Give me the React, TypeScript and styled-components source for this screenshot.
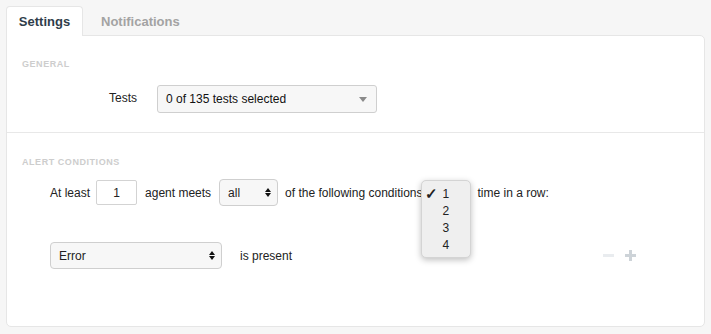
import React from 'react';
import styled, { createGlobalStyle } from 'styled-components';

const GlobalStyle = createGlobalStyle`
  html, body {
    margin: 0;
    padding: 0;
    background: #f6f6f6;
    font-family: "Liberation Sans", Arial, sans-serif;
    font-size: 12px;
    color: #222;
  }
`;

const Page = styled.div`
  width: 711px;
  height: 334px;
  padding: 6px 6px 0 6px;
  box-sizing: border-box;
`;

const TabBar = styled.div`
  display: flex;
  height: 30px;
`;

const Tab = styled.div<{ active?: boolean }>`
  width: ${(p) => (p.active ? '77px' : 'auto')};
  padding: ${(p) => (p.active ? '0' : '0 17px')};
  box-sizing: border-box;
  display: flex;
  align-items: center;
  justify-content: center;
  font-size: 13px;
  font-weight: bold;
  color: ${(p) => (p.active ? '#2f3d4a' : '#a3a3a3')};
  background: ${(p) => (p.active ? '#fff' : 'transparent')};
  border: 1px solid ${(p) => (p.active ? '#e6e6e6' : 'transparent')};
  border-bottom: none;
  border-radius: 4px 4px 0 0;
  position: relative;
  z-index: 1;
  height: 30px;
`;

const Panel = styled.div`
  background: #fff;
  border: 1px solid #e6e6e6;
  border-radius: 0 5px 5px 5px;
  height: 292px;
  box-sizing: border-box;
  margin-top: -1px;
  position: relative;
`;

const Section = styled.div<{ bordered?: boolean }>`
  padding: ${(p) => (p.bordered ? '24px 15px 0' : '23px 15px 0')};
  border-top: ${(p) => (p.bordered ? '1px solid #e8e8e8' : 'none')};
  height: ${(p) => (p.bordered ? 'auto' : '96px')};
  box-sizing: border-box;
`;

const SectionTitle = styled.div`
  font-size: 9px;
  font-weight: bold;
  color: #cdcdcd;
  letter-spacing: 0.55px;
  text-transform: uppercase;
  line-height: 10px;
`;

const FieldRow = styled.div`
  display: flex;
  align-items: center;
  margin-top: 16px;
`;

const FieldLabel = styled.div`
  width: 135px;
  padding-right: 20px;
  box-sizing: border-box;
  text-align: right;
  font-size: 12px;
  margin-top: -3px;
`;

const Dropdown = styled.div<{ w: number }>`
  width: ${(p) => p.w}px;
  height: 28px;
  box-sizing: border-box;
  border: 1px solid #cfcfcf;
  border-radius: 3px;
  background: #f7f7f7;
  display: flex;
  align-items: center;
  justify-content: space-between;
  padding: 0 8px 0 8px;
  font-size: 12px;
  color: #111;
`;

const Caret = styled.span`
  width: 0;
  height: 0;
  border-left: 4px solid transparent;
  border-right: 4px solid transparent;
  border-top: 5px solid #8a8a8a;
  margin-right: 1px;
`;

const ConditionRow = styled.div<{ top: number }>`
  display: flex;
  align-items: center;
  margin-top: ${(p) => p.top}px;
  padding-left: 28px;
  font-size: 12px;
  position: relative;
`;

const Text = styled.span<{ ml?: number }>`
  margin-left: ${(p) => p.ml || 0}px;
`;

const NumberInput = styled.div`
  width: 41px;
  height: 25px;
  box-sizing: border-box;
  border: 1px solid #d3d3d3;
  border-radius: 2px;
  display: flex;
  align-items: center;
  justify-content: center;
  margin-left: 6px;
  background: #fff;
`;

const NativeSelect = styled.div<{ w: number; ml: number }>`
  width: ${(p) => p.w}px;
  height: 27px;
  box-sizing: border-box;
  border: 1px solid #cfcfcf;
  border-radius: 4px;
  background: #f7f7f7;
  display: flex;
  align-items: center;
  justify-content: space-between;
  padding: 0 6px 0 8px;
  margin-left: ${(p) => p.ml}px;
`;

const Arrows = styled.span`
  display: flex;
  flex-direction: column;
  gap: 1px;
  align-items: center;
`;

const Up = styled.span`
  width: 0;
  height: 0;
  border-left: 3px solid transparent;
  border-right: 3px solid transparent;
  border-bottom: 4px solid #111;
`;

const Down = styled.span`
  width: 0;
  height: 0;
  border-left: 3px solid transparent;
  border-right: 3px solid transparent;
  border-top: 4px solid #111;
`;

const HiddenSelectSlot = styled.div`
  width: 50px;
  height: 27px;
  margin-left: -2px;
  position: relative;
`;

const Popup = styled.div`
  position: absolute;
  left: 0;
  top: 1px;
  width: 50px;
  padding: 4px 0 4px;
  box-sizing: border-box;
  background: #efefef;
  border: 1px solid #d4d4d4;
  border-radius: 5px;
  box-shadow: 0 2px 6px rgba(0, 0, 0, 0.25);
  z-index: 5;
`;

const Option = styled.div`
  display: flex;
  align-items: center;
  height: 17px;
  font-size: 12px;
  color: #222;
`;

const Check = styled.span`
  width: 21px;
  text-align: right;
  padding-right: 5px;
  box-sizing: border-box;
  font-size: 15px;
  font-weight: bold;
  line-height: 17px;
`;

const Actions = styled.div`
  margin-left: auto;
  margin-right: 53px;
  display: flex;
  gap: 11px;
  align-items: center;
`;

const Minus = styled.span`
  width: 11px;
  height: 3px;
  background: #e9ecef;
`;

const Plus = styled.span`
  width: 11px;
  height: 11px;
  position: relative;
  &::before,
  &::after {
    content: '';
    position: absolute;
    background: #cdd3d8;
  }
  &::before {
    left: 0;
    top: 4px;
    width: 11px;
    height: 3px;
  }
  &::after {
    left: 4px;
    top: 0;
    width: 3px;
    height: 11px;
  }
`;

const App = () => {
  return (
    <Page>
      <GlobalStyle />
      <TabBar>
        <Tab active>Settings</Tab>
        <Tab>Notifications</Tab>
      </TabBar>
      <Panel>
        <Section>
          <SectionTitle>General</SectionTitle>
          <FieldRow>
            <FieldLabel>Tests</FieldLabel>
            <Dropdown w={220}>
              <span>0 of 135 tests selected</span>
              <Caret />
            </Dropdown>
          </FieldRow>
        </Section>
        <Section bordered>
          <SectionTitle>Alert Conditions</SectionTitle>
          <ConditionRow top={12}>
            <Text>At least</Text>
            <NumberInput>1</NumberInput>
            <Text ml={8}>agent meets</Text>
            <NativeSelect w={59} ml={8}>
              <span>all</span>
              <Arrows>
                <Up />
                <Down />
              </Arrows>
            </NativeSelect>
            <Text ml={7}>of the following conditions</Text>
            <HiddenSelectSlot>
              <Popup>
                <Option>
                  <Check>✓</Check>1
                </Option>
                <Option>
                  <Check />2
                </Option>
                <Option>
                  <Check />3
                </Option>
                <Option>
                  <Check />4
                </Option>
              </Popup>
            </HiddenSelectSlot>
            <Text ml={7}>time in a row:</Text>
          </ConditionRow>
          <ConditionRow top={36}>
            <NativeSelect w={172} ml={0}>
              <span>Error</span>
              <Arrows>
                <Up />
                <Down />
              </Arrows>
            </NativeSelect>
            <Text ml={18}>is present</Text>
            <Actions>
              <Minus />
              <Plus />
            </Actions>
          </ConditionRow>
        </Section>
      </Panel>
    </Page>
  );
};

export default App;
